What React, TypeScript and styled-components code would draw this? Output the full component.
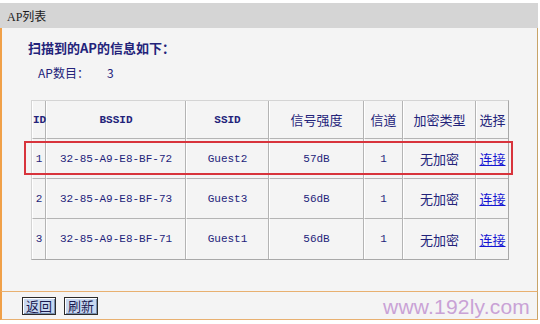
import React from 'react'
import styled, { createGlobalStyle } from 'styled-components'

const Global = createGlobalStyle`
  html, body {
    margin: 0;
    padding: 0;
    background: #ffffff;
  }
  body {
    font-family: "Liberation Sans", "Noto Sans CJK SC", sans-serif;
  }
`

const Page = styled.div`
  position: relative;
  width: 540px;
  height: 324px;
  padding-top: 3px;
  box-sizing: border-box;
  overflow: hidden;
`

const TitleBar = styled.div`
  height: 25px;
  width: 538px;
  background: #d5d5d5;
  display: flex;
  align-items: center;
  padding-left: 7px;
  box-sizing: border-box;
  font-size: 12px;
  color: #1c1c1c;
  font-family: "Liberation Serif", "Noto Sans CJK SC", serif;
`

const Panel = styled.div`
  width: 538px;
  height: 263px;
  box-sizing: border-box;
  background: #f4f4f4;
  border-left: 2px solid #f0a048;
  border-right: 1px solid #c8a468;
  padding: 11px 0 0 26px;
`

const Heading = styled.div`
  font-family: "Noto Sans CJK SC", sans-serif;
  font-size: 13px;
  font-weight: 700;
  color: #23237a;
  height: 18px;
  line-height: 18px;
`

const CountLine = styled.div`
  font-family: "Noto Sans CJK SC", sans-serif;
  font-size: 12px;
  color: #23237a;
  height: 18px;
  line-height: 18px;
  margin-top: 7px;
  padding-left: 10px;
  display: flex;
  gap: 18px;
`

const TableWrap = styled.div`
  position: relative;
  margin-top: 18px;
  margin-left: 3px;
  width: 478px;
`

const Grid = styled.table`
  border-collapse: separate;
  border-spacing: 0;
  width: 478px;
  table-layout: fixed;
  box-sizing: border-box;
  border-top: 1px solid #d4d4d4;
  border-left: 1px solid #d4d4d4;
  border-right: 1px solid #a8a8a8;
  border-bottom: 1px solid #a8a8a8;
`

const Head = styled.th<{ $w: number }>`
  width: ${p => p.$w}px;
  box-sizing: border-box;
  height: 38px;
  padding: 0;
  font-weight: normal;
  font-size: 13px;
  color: #23237a;
  font-family: "Noto Sans CJK SC", sans-serif;
  text-align: center;
  border-right: 1px solid #b4b4b4;
  border-bottom: 1px solid #b4b4b4;
  border-left: 1px solid #ffffff;
  &:last-child {
    border-right: none;
  }
`

const LatinHead = styled(Head)`
  font-family: "Liberation Mono", monospace;
  font-weight: 700;
  font-size: 11px;
`

const Cell = styled.td<{ $mono?: boolean }>`
  height: 40px;
  box-sizing: border-box;
  padding: 0;
  text-align: center;
  color: #23237a;
  font-family: ${p => (p.$mono ? '"Liberation Mono", monospace' : '"Noto Sans CJK SC", sans-serif')};
  font-size: ${p => (p.$mono ? '11px' : '13px')};
  border-right: 1px solid #b4b4b4;
  border-bottom: 1px solid #b4b4b4;
  border-left: 1px solid #ffffff;
  tr:last-child > & {
    border-bottom: none;
  }
  &:last-child {
    border-right: none;
  }
`

const Connect = styled.a`
  color: #1414d2;
  text-decoration: underline;
  font-family: "Noto Sans CJK SC", sans-serif;
  font-size: 13px;
  cursor: pointer;
`

const Highlight = styled.div`
  position: absolute;
  left: -7px;
  top: 41px;
  width: 489px;
  height: 34px;
  box-sizing: border-box;
  border: 2px solid #d8343c;
  pointer-events: none;
`

const Footer = styled.div`
  width: 538px;
  height: 29px;
  box-sizing: border-box;
  background: #f4f4f4;
  border-top: 1px solid #e8b070;
  border-left: 2px solid #f0a048;
  border-right: 1px solid #c8a468;
  border-bottom: 1px solid #e8b070;
  display: flex;
  align-items: center;
  gap: 8px;
  padding-left: 20px;
`

const Btn = styled.button`
  height: 18px;
  padding: 0 3px;
  background: #c8d8f0;
  border: 1px solid #2a2a2a;
  box-shadow: inset 1px 1px 0 #ffffff, inset -1px -1px 0 #7890b0;
  font-family: "Noto Sans CJK SC", sans-serif;
  font-size: 13px;
  line-height: 14px;
  color: #1a1a50;
`

const Watermark = styled.div`
  position: absolute;
  right: 10px;
  bottom: 5px;
  font-family: "Liberation Sans", sans-serif;
  font-size: 21px;
  color: #c9a2d6;
  letter-spacing: 0.2px;
`

const rows = [
  { id: 1, bssid: '32-85-A9-E8-BF-72', ssid: 'Guest2', signal: '57dB', ch: 1 },
  { id: 2, bssid: '32-85-A9-E8-BF-73', ssid: 'Guest3', signal: '56dB', ch: 1 },
  { id: 3, bssid: '32-85-A9-E8-BF-71', ssid: 'Guest1', signal: '56dB', ch: 1 },
]

export default function App() {
  return (
    <>
      <Global />
      <Page>
        <TitleBar>AP列表</TitleBar>
        <Panel>
          <Heading>扫描到的AP的信息如下：</Heading>
          <CountLine>
            <span>AP数目：</span>
            <span>3</span>
          </CountLine>
          <TableWrap>
            <Grid>
              <thead>
                <tr>
                  <LatinHead $w={14}>ID</LatinHead>
                  <LatinHead $w={140}>BSSID</LatinHead>
                  <LatinHead $w={83}>SSID</LatinHead>
                  <Head $w={95}>信号强度</Head>
                  <Head $w={39}>信道</Head>
                  <Head $w={73}>加密类型</Head>
                  <Head $w={32}>选择</Head>
                </tr>
              </thead>
              <tbody>
                {rows.map(r => (
                  <tr key={r.id}>
                    <Cell $mono>{r.id}</Cell>
                    <Cell $mono>{r.bssid}</Cell>
                    <Cell $mono>{r.ssid}</Cell>
                    <Cell $mono>{r.signal}</Cell>
                    <Cell $mono>{r.ch}</Cell>
                    <Cell>无加密</Cell>
                    <Cell>
                      <Connect>连接</Connect>
                    </Cell>
                  </tr>
                ))}
              </tbody>
            </Grid>
            <Highlight />
          </TableWrap>
        </Panel>
        <Footer>
          <Btn>返回</Btn>
          <Btn>刷新</Btn>
        </Footer>
        <Watermark>www.192ly.com</Watermark>
      </Page>
    </>
  )
}
